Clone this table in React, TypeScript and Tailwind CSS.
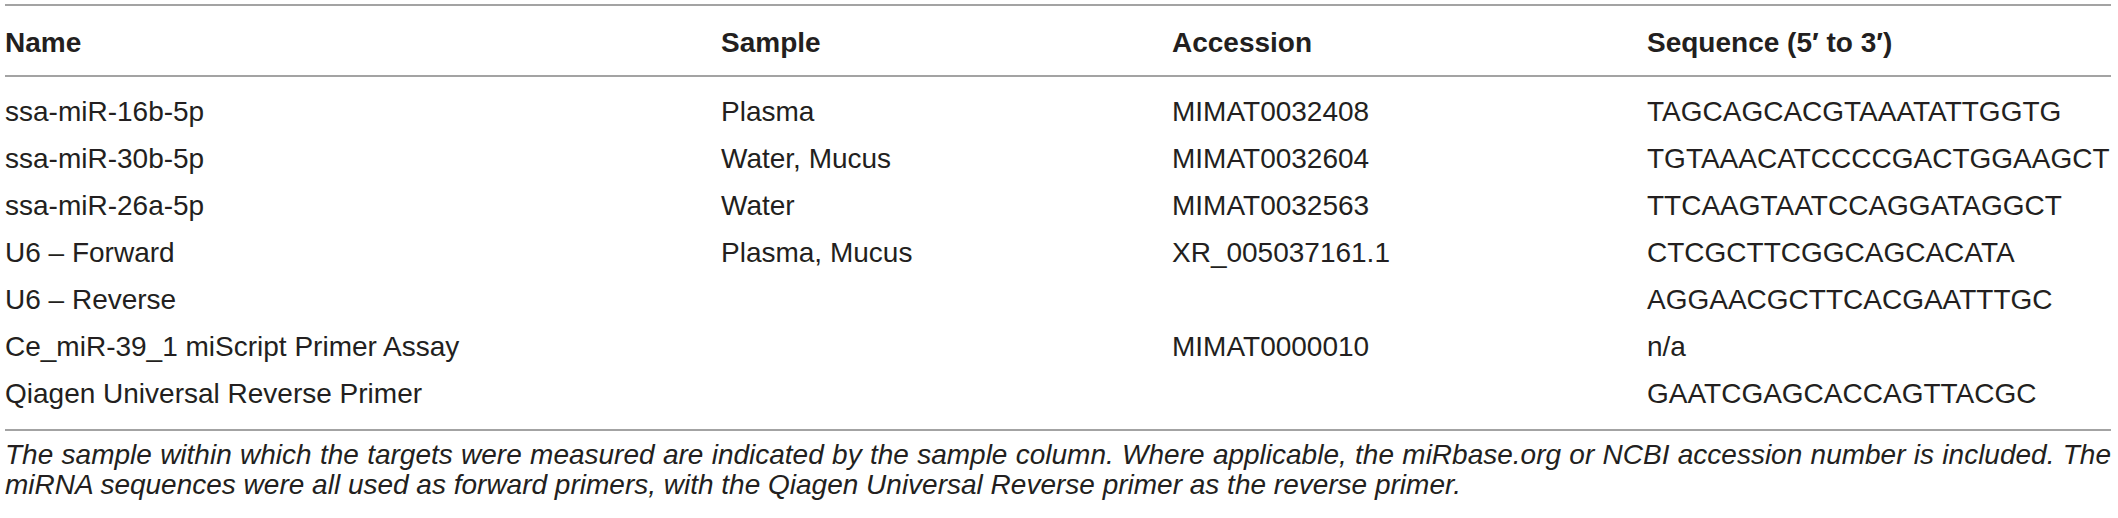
const rows = [
  { name: 'ssa-miR-16b-5p', sample: 'Plasma', accession: 'MIMAT0032408', sequence: 'TAGCAGCACGTAAATATTGGTG' },
  { name: 'ssa-miR-30b-5p', sample: 'Water, Mucus', accession: 'MIMAT0032604', sequence: 'TGTAAACATCCCCGACTGGAAGCT' },
  { name: 'ssa-miR-26a-5p', sample: 'Water', accession: 'MIMAT0032563', sequence: 'TTCAAGTAATCCAGGATAGGCT' },
  { name: 'U6 – Forward', sample: 'Plasma, Mucus', accession: 'XR_005037161.1', sequence: 'CTCGCTTCGGCAGCACATA' },
  { name: 'U6 – Reverse', sample: '', accession: '', sequence: 'AGGAACGCTTCACGAATTTGC' },
  { name: 'Ce_miR-39_1 miScript Primer Assay', sample: '', accession: 'MIMAT0000010', sequence: 'n/a' },
  { name: 'Qiagen Universal Reverse Primer', sample: '', accession: '', sequence: 'GAATCGAGCACCAGTTACGC' },
]

const cols = 'grid grid-cols-[716px_451px_475px_1fr]'

export default function App() {
  return (
    <div className="bg-white w-[2118px] h-[518px] pt-[4px] font-['Liberation_Sans',Arial,sans-serif] text-[28px] text-[#231f20]">
      <div className="ml-[5px] w-[2106px]">
        {/* header */}
        <div className={`${cols} border-t-2 border-b-2 border-[#a3a3a3] pt-[13px] pb-[9px] leading-[47px] font-bold`}>
          <div>Name</div>
          <div>Sample</div>
          <div>Accession</div>
          <div>Sequence (5′ to 3′)</div>
        </div>

        {/* body */}
        <div className="border-b-2 border-[#a3a3a3] pt-[11px] pb-[12px] leading-[47px]">
          {rows.map((r) => (
            <div key={r.name} className={cols}>
              <div>{r.name}</div>
              <div>{r.sample}</div>
              <div>{r.accession}</div>
              <div>{r.sequence}</div>
            </div>
          ))}
        </div>

        {/* footnote */}
        <div className="pt-[9px] italic leading-[30px] text-[#231f20]">
          <div className="text-justify [text-align-last:justify]">
            The sample within which the targets were measured are indicated by the sample column. Where applicable, the miRbase.org or NCBI accession number is included. The
          </div>
          <div>
            miRNA sequences were all used as forward primers, with the Qiagen Universal Reverse primer as the reverse primer.
          </div>
        </div>
      </div>
    </div>
  )
}
